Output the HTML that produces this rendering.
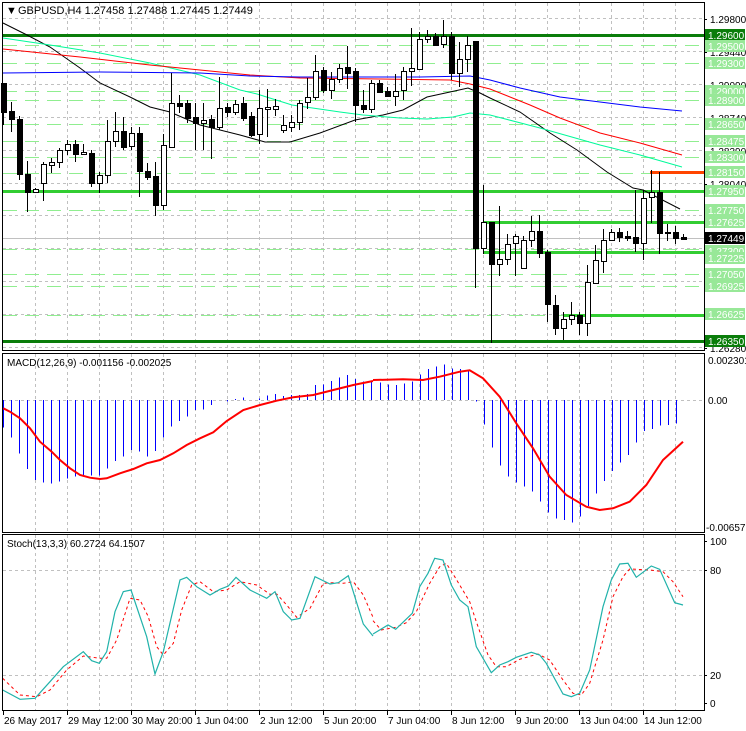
<!DOCTYPE html>
<html><head><meta charset="utf-8"><style>
html,body{margin:0;padding:0;background:#fff;}
svg{display:block;font-family:"Liberation Sans",sans-serif;}
</style></head><body>
<svg id="s" width="746" height="731" viewBox="0 0 746 731" xmlns="http://www.w3.org/2000/svg">
<rect width="746" height="731" fill="#fff"/>
<g id="g"></g>
<text x="6" y="14" font-size="11" fill="#000">▼</text>
<text x="18" y="14" font-size="11" fill="#000">GBPUSD,H4  1.27458 1.27488 1.27445 1.27449</text>
<text x="7" y="366" font-size="10" fill="#000">MACD(12,26,9) -0.001156 -0.002025</text>
<text x="7" y="547" font-size="10" fill="#000">Stoch(13,3,3) 60.2724 64.1507</text>
</svg>
<script>
var g=document.getElementById('g'),h='';
function L(x1,y1,x2,y2,c,w,d){h+='<line x1="'+x1+'" y1="'+y1+'" x2="'+x2+'" y2="'+y2+'" stroke="'+c+'" stroke-width="'+(w||1)+'"'+(d?' stroke-dasharray="'+d+'"':'')+' shape-rendering="crispEdges"/>';}
function P(pts,c,w,ox,oy,sc,d){var s=pts.map(function(p){return ((p[0]/sc)+ox).toFixed(1)+','+((p[1]/sc)+oy).toFixed(1)}).join(' ');h+='<polyline points="'+s+'" fill="none" stroke="'+c+'" stroke-width="'+w+'"'+(d?' stroke-dasharray="'+d+'"':'')+'/>';}
function T(x,y,t,c,fs){h+='<text x="'+x+'" y="'+y+'" font-size="'+(fs||10)+'" fill="'+(c||'#000')+'">'+t+'</text>';}
var R=704;
for(var x=35;x<704;x+=32){L(x+.5,3,x+.5,350,'#c0c0c0',1,'3 3');L(x+.5,354,x+.5,532,'#c0c0c0',1,'3 3');L(x+.5,535,x+.5,710,'#c0c0c0',1,'3 3');}
[18,51,84,117,150,183,215,248,281,314,347].forEach(function(y){L(3,y+.5,R,y+.5,'#c0c0c0',1,'3 3');});
L(3,400.5,R,400.5,'#c0c0c0',1,'3 3');
L(3,570.5,R,570.5,'#c0c0c0',1,'3 3');L(3,675.5,R,675.5,'#c0c0c0',1,'3 3');
[45,63,91,100,124,141,157,173,210,249,274,286].forEach(function(y){L(3,y+.5,R,y+.5,'#90ee90',1,'14 8');});
L(3,315.5,563,315.5,'#90ee90',1,'14 8');
L(3,238.5,R,238.5,'#c0c0c0',1);
L(3,35.5,R,35.5,'#0a7d0a',3);L(3,341.5,R,341.5,'#0a7d0a',3);
L(3,191.5,R,191.5,'#32cd32',3);L(483,222.5,R,222.5,'#32cd32',3);L(483,252.5,R,252.5,'#32cd32',3);L(563,315.5,R,315.5,'#32cd32',3);
L(650,172.5,R,172.5,'#ff4500',3);
P([[3,23],[27,35],[50,47],[80,68],[100,83],[130,97],[150,107],[170,112],[200,125],[240,135],[265,142],[290,142],[320,133],[355,120],[383,115],[403,110],[427,97],[450,92],[468,88],[480,93],[490,98],[520,112],[550,133],[577,150],[607,172],[633,188],[643,190],[680,209]],'#000',1,0,0,1);
P([[3,38],[50,45],[100,53],[150,63],[200,75],[240,90],[257,94],[292,105],[340,112],[363,115],[400,118],[427,119],[453,117],[470,113],[490,115],[540,128],[600,145],[640,155],[682,167]],'#00fa9a',1,0,0,1);
P([[3,49],[80,57],[150,65],[250,75],[300,78],[380,79],[450,80],[470,84],[490,89],[530,105],[560,118],[600,133],[640,143],[682,155]],'#ff0000',1,0,0,1);
P([[3,73],[100,72],[200,73],[250,76],[300,77],[420,77],[470,76],[480,78],[490,80],[520,88],[560,97],[608,103],[640,107],[682,111]],'#0000ff',1,0,0,1);
var C=[[83,112,83,125,1],[111,119,102,132,1],[119,174,116,180,1],[174,192,161,212,1],[189,192,188,193,0],[164,183,162,201,0],[162,165,158,173,0],[150,162,148,168,0],[144,150,140,155,0],[144,154,140,162,1],[152,154,144,155,0],[153,183,150,187,1],[175,183,172,193,0],[141,175,120,183,0],[131,141,112,147,0],[131,147,117,150,1],[133,146,127,150,0],[133,171,127,197,1],[171,177,163,180,1],[176,205,162,216,1],[145,205,134,210,0],[103,147,73,147,0],[103,106,95,113,1],[103,118,100,123,1],[117,123,103,150,1],[120,123,103,150,0],[119,127,115,159,1],[108,127,77,130,0],[107,112,103,117,1],[104,112,100,115,0],[103,118,97,121,1],
[116,135,112,137,1],[108,134,90,144,0],[107,109,89,137,0],[106,109,99,116,0],[125,130,115,133,0],[122,127,115,132,0],[103,122,100,130,0],[97,102,78,109,0],[71,97,55,100,0],[70,90,67,93,1],[79,90,72,99,0],[68,79,64,83,0],[67,73,46,89,1],[71,105,68,122,1],[105,109,90,113,1],[83,109,80,113,0],[83,92,80,93,1],[91,96,87,97,1],[91,96,74,106,0],[71,90,67,100,0],[68,71,28,86,0],[39,69,32,70,0],[36,39,30,43,0],[36,45,33,46,1],[36,44,20,48,0],[36,73,32,80,1],[59,73,42,87,0],[45,59,36,72,0],[41,248,41,288,1],[222,248,185,254,0],
[222,264,222,343,1],[259,264,206,276,0],[244,259,234,265,0],[236,243,234,276,0],[240,268,236,268,0],[231,240,216,247,0],[231,253,215,258,1],[252,304,250,322,1],[305,328,295,335,1],[319,328,312,340,0],[315,319,302,325,0],[315,323,312,335,1],[282,323,265,336,0],[260,283,245,283,0],[240,261,229,273,0],[232,240,229,241,0],[232,237,228,242,1],[236,238,231,241,1],[237,243,190,252,1],[198,243,190,260,0],[192,197,170,223,0],[192,233,172,254,1],[232,233,224,241,1],[232,238,226,244,1],[237,239,234,239,1]];
C.forEach(function(c,i){var x=3+8*i;L(x+.5,c[2],x+.5,c[3],'#000',1);var hh=Math.max(c[1]-c[0],1);
h+='<rect x="'+(x-2)+'.5" y="'+(c[0]+.5)+'" width="5" height="'+hh+'" fill="'+(c[4]?'#000':'#fff')+'" stroke="#000" stroke-width="1" shape-rendering="crispEdges"/>';});
var m1=[248,278,325,372,405,413,416,410,400,395,392,392,392,370,348,335,315,320,335,318,278,245,228,215,195,193,180,165,170,162,158,165,160,152,147,153,150,150,147,120,118,108,97,90,102,110,108];
m1.forEach(function(v,i){var x=3+8*i;var y=345+v/3;L(x+.5,400,x+.5,y,'#0000ff',1);});
var m2=[113,118,120,115,110,88,72,65,58,70,72,75,170,238,308,362,395,413,425,440,470,503,520,525,532,515,483,445,408,378,352,330,293,258,252,242,240,235];
m2.forEach(function(v,i){var x=380+8*i;var y=345+v/3;L(x+.5,400,x+.5,y,'#0000ff',1);});
P([[10,190],[30,200],[60,220],[90,250],[120,290],[155,320],[180,345],[210,370],[240,390],[270,398],[300,402],[320,400],[360,385],[400,372],[440,355],[480,345],[520,325],[560,300],[600,280],[640,262],[680,228],[730,195],[780,180],[830,167],[880,157],[940,150],[1000,135],[1060,120],[1119,108]],'#ff0000',2,0,345,3);
P([[0,105],[90,103],[150,105],[200,95],[260,80],[290,76],[330,100],[380,155],[430,235],[480,310],[530,395],[580,450],[640,485],[680,495],[720,490],[770,470],[820,420],[870,345],[930,290]],'#ff0000',2,373,345,3);
P([[8,445],[60,495],[110,500],[150,480],[200,420],[250,378],[300,385],[320,385],[350,330],[390,205],[420,210],[445,260],[470,350],[490,375],[520,340],[545,240],[575,165],[600,155],[640,185],[680,180],[720,155],[770,165],[810,193],[830,192],[860,225],[890,262],[930,235],[970,160],[1000,158],[1030,160],[1060,155],[1090,195],[1119,262]],'#ff0000',1,0,530,3,'3 3');
P([[0,272],[25,300],[68,292],[100,278],[130,245],[170,160],[200,110],[220,100],[245,140],[290,215],[310,275],[345,375],[370,410],[400,410],[440,388],[495,372],[530,390],[570,450],[600,490],[625,495],[650,460],[690,330],[720,200],[750,140],[770,117],[830,120],[870,125],[900,155],[930,200]],'#ff0000',1,373,530,3,'3 3');
P([[8,480],[60,508],[105,505],[150,455],[190,410],[250,365],[275,392],[298,400],[320,365],[345,245],[370,185],[393,180],[440,320],[465,432],[490,365],[540,150],[560,142],[590,170],[630,195],[660,178],[685,168],[708,142],[750,180],[800,205],[825,185],[850,245],[875,270],[900,265],[945,140],[990,162],[1015,158],[1045,137],[1090,282],[1119,318]],'#20b2aa',1.2,0,530,3);
P([[0,312],[45,285],[68,298],[118,250],[140,170],[165,130],[185,85],[210,90],[235,165],[260,210],[285,230],[310,350],[355,428],[380,405],[405,395],[430,382],[475,367],[500,375],[520,400],[570,492],[595,500],[620,490],[650,420],[690,230],[715,150],[740,102],[765,100],[790,142],[835,108],[860,118],[905,218],[930,225]],'#20b2aa',1.2,373,530,3);
h+='<rect x="2.5" y="2.5" width="702" height="348" fill="none" stroke="#000"/>';
h+='<rect x="2.5" y="353.5" width="702" height="179" fill="none" stroke="#000"/>';
h+='<rect x="2.5" y="534.5" width="702" height="176" fill="none" stroke="#000"/>';
[[19,'1.29800'],[52,'1.29440'],[85,'1.29090'],[118,'1.28740'],[151,'1.28390'],[184,'1.28040'],[348,'1.26280']].forEach(function(a){L(704,a[0]+.5,707,a[0]+.5,'#000');T(710,a[0]+4,a[1]);});
var lab=[[35,'1.29600','#0a7d0a'],[46,'1.29500','#98e898'],[63,'1.29300','#98e898'],[91,'1.29000','#98e898'],[100,'1.28900','#98e898'],[124,'1.28650','#98e898'],[141,'1.28475','#98e898'],[157,'1.28300','#98e898'],[172,'1.28150','#98e898'],[191,'1.27950','#98e898'],[210,'1.27750','#98e898'],[222,'1.27625','#98e898'],[251,'1.27300','#98e898'],[258,'1.27225','#98e898'],[274,'1.27050','#98e898'],[286,'1.26925','#98e898'],[314,'1.26625','#98e898'],[341,'1.26350','#0a7d0a'],[238,'1.27449','#000']];
lab.forEach(function(a){h+='<rect x="705" y="'+(a[0]-6)+'" width="40" height="12" fill="'+a[2]+'"/>';T(708,a[0]+4,a[1],'#fff');});
T(708,364,'0.002301');T(708,404,'0.00');T(706,531,'-0.006571');
[[541,'100'],[570,'80'],[675,'20'],[703,'0']].forEach(function(a){L(704,a[0]+.5,707,a[0]+.5,'#000');T(710,a[0]+4,a[1]);});
[[3,'26 May 2017'],[67,'29 May 12:00'],[131,'30 May 20:00'],[195,'1 Jun 04:00'],[259,'2 Jun 12:00'],[323,'5 Jun 20:00'],[387,'7 Jun 04:00'],[451,'8 Jun 12:00'],[515,'9 Jun 20:00'],[579,'13 Jun 04:00'],[643,'14 Jun 12:00']].forEach(function(a){L(a[0]+.5,711,a[0]+.5,715,'#000');T(a[0]+1,724,a[1]);});
g.innerHTML=h;
</script>
</body></html>
